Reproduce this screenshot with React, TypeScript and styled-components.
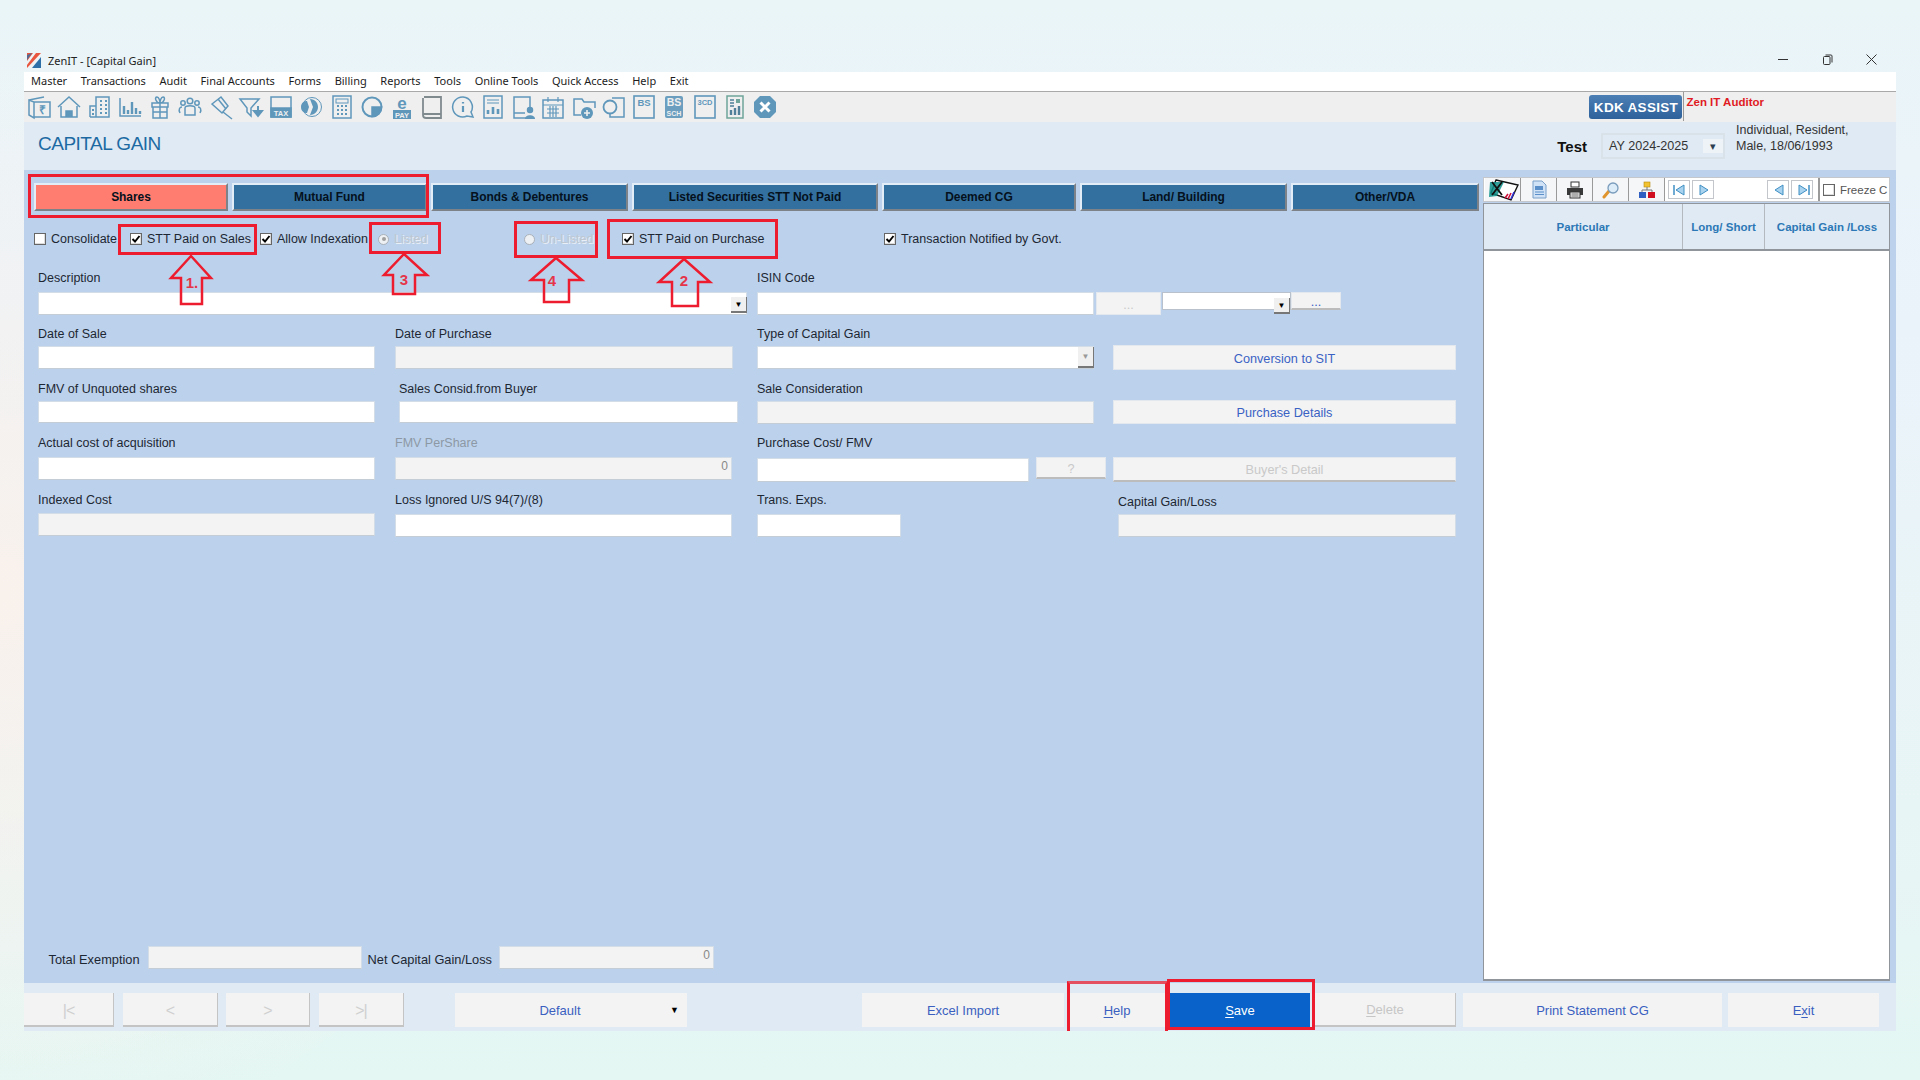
import React, { FunctionComponent, ReactNode } from 'react'
import styled, { createGlobalStyle, css } from 'styled-components'

const GlobalStyle = createGlobalStyle`
  html, body {
    margin: 0;
    padding: 0;
  }
  body {
    font-family: "Liberation Sans", Arial, sans-serif;
    font-size: 12px;
  }
`

const Page = styled.div`
  position: relative;
  box-sizing: border-box;
  width: 1920px;
  height: 1080px;
  padding: 47px 24px 0;
  overflow: hidden;
  background:
    radial-gradient(circle at 0 55%, #f9f1ec 0, rgba(249, 241, 236, 0) 28%),
    linear-gradient(180deg, #eaf5f8 0%, #eaf3fa 30%, #e8f5f5 75%, #e4f7f3 100%);
`

const Window = styled.div`
  width: 1872px;
`

const TitleBar = styled.div`
  display: flex;
  align-items: center;
  box-sizing: border-box;
  height: 25px;
  padding: 1px 19px 0 3px;
`
const TitleText = styled.span`
  margin-left: 7px;
  font-family: "Noto Sans", sans-serif;
  font-size: 11px;
  color: #222;
`
const WindowControls = styled.div`
  display: flex;
  gap: 33px;
  margin-left: auto;
  margin-top: -1px;
  color: #333;
`

const MenuBar = styled.div`
  display: flex;
  align-items: center;
  gap: 13.65px;
  box-sizing: border-box;
  height: 20px;
  padding: 0 0 2px 7px;
  background: #fff;
  border-bottom: 1px solid #a9a9a9;
`
const MenuItem = styled.span`
  font-family: "Noto Sans", sans-serif;
  font-size: 11px;
  color: #1c1c1c;
`

const ToolBar = styled.div`
  display: flex;
  height: 30px;
  background: #efefef;
`
const IconCell = styled.div`
  display: flex;
  align-items: center;
  justify-content: center;
  width: 30.25px;
  height: 30px;
`
const AssistGroup = styled.div`
  display: flex;
  margin-left: auto;
  padding-right: 132px;
`
const AssistButton = styled.div`
  display: flex;
  align-items: center;
  justify-content: center;
  width: 93px;
  height: 24px;
  margin-top: 3px;
  border-radius: 3px;
  background: linear-gradient(180deg, #4b7fb4 0%, #2e619a 100%);
  color: #fff;
  font-weight: 700;
  font-size: 13.5px;
  letter-spacing: 0.3px;
`
const AssistDivider = styled.div`
  width: 1px;
  height: 29px;
  margin-left: 1px;
  background: #9a9a9a;
`
const AuditorText = styled.span`
  margin: 4px 0 0 2px;
  color: #e01b24;
  font-weight: 700;
  font-size: 11.5px;
`

const Header = styled.div`
  display: flex;
  align-items: center;
  height: 48px;
  background: #e0eaf4;
`
const PageTitle = styled.h1`
  margin: -4px 0 0 14px;
  font-size: 19px;
  font-weight: 400;
  letter-spacing: -0.5px;
  color: #1d6aa3;
`
const CustomerName = styled.span`
  margin-left: auto;
  font-size: 15px;
  font-weight: 700;
  color: #111;
`
const YearSelect = styled.div`
  display: flex;
  align-items: center;
  box-sizing: border-box;
  width: 124px;
  height: 26px;
  margin-left: 14px;
  padding-left: 6px;
  border: 2px solid #d9e1e9;
  font-size: 12.6px;
  color: #333;
`
const YearArrow = styled.span`
  display: flex;
  align-items: center;
  justify-content: center;
  width: 20px;
  height: 14px;
  margin-left: auto;
  background: #eef3f8;
  font-size: 11px;
  color: #2c3e50;
`
const ProfileText = styled.div`
  align-self: flex-start;
  width: 160px;
  margin-left: 11px;
  font-size: 12.5px;
  line-height: 16px;
  color: #333;
`

const Main = styled.div`
  display: flex;
  height: 813px;
  background: #bcd2ec;
`
const LeftPane = styled.div`
  width: 1459px;
`
const TabRow = styled.div`
  display: flex;
  gap: 4px;
  padding: 13px 0 0 10px;
`
const Tab = styled.div<{ $w: number; $active?: boolean }>`
  display: flex;
  align-items: center;
  justify-content: center;
  box-sizing: border-box;
  width: ${(p) => p.$w}px;
  height: 28px;
  border: 2px solid;
  border-color: #e3edf7 #7d8288 #7d8288 #e3edf7;
  background: ${(p) => (p.$active ? '#ff7d70' : '#33709f')};
  color: #05111c;
  font-size: 12px;
  font-weight: 700;
  letter-spacing: -0.05px;
`

const OptionRow = styled.div`
  display: flex;
  align-items: center;
  height: 16px;
  margin: 20px 0 24px;
  padding-left: 10px;
`
const Option = styled.label<{ $w: number; $disabled?: boolean }>`
  display: flex;
  align-items: center;
  gap: 5px;
  width: ${(p) => p.$w}px;
  font-size: 12.5px;
  white-space: nowrap;
  color: ${(p) => (p.$disabled ? '#bec7d1' : '#1d2733')};
  ${(p) =>
    p.$disabled &&
    css`
      text-shadow: 1px 1px 0 #e9eff6;
    `}
`
const CheckBox = styled.span`
  display: flex;
  align-items: center;
  justify-content: center;
  flex: none;
  box-sizing: border-box;
  width: 12px;
  height: 12px;
  border: 1px solid #666;
  background: #fff;
  box-shadow: inset -1px -1px 0 #dcdcdc;
`
const Radio = styled.span<{ $on?: boolean }>`
  position: relative;
  flex: none;
  box-sizing: border-box;
  width: 11px;
  height: 11px;
  border: 1px solid #a9b1b9;
  border-radius: 50%;
  background: #eef1f4;
  ${(p) =>
    p.$on &&
    css`
      &::after {
        content: '';
        position: absolute;
        inset: 2.5px;
        border-radius: 50%;
        background: #a0a0a0;
      }
    `}
`

const FormRow = styled.div<{ $top?: number }>`
  display: flex;
  align-items: flex-start;
  padding-left: 14px;
  margin-top: ${(p) => p.$top ?? 0}px;
`
const FieldWrap = styled.div<{ $w: number; $ml?: number }>`
  flex: none;
  width: ${(p) => p.$w}px;
  margin-left: ${(p) => p.$ml ?? 0}px;
`
const FieldLabel = styled.div<{ $gap: number; $muted?: boolean; $shift?: number }>`
  height: 14px;
  margin-bottom: ${(p) => p.$gap}px;
  margin-top: ${(p) => p.$shift ?? 0}px;
  line-height: 14px;
  font-size: 12.5px;
  white-space: nowrap;
  color: ${(p) => (p.$muted ? '#8d98a5' : '#1d2733')};
`
const TextBox = styled.input<{ $h?: number; $w?: number }>`
  display: block;
  box-sizing: border-box;
  width: ${(p) => (p.$w ? `${p.$w}px` : '100%')};
  height: ${(p) => p.$h ?? 23}px;
  padding: 0 3px 6px;
  border: 1px solid #d3dde8;
  border-bottom-color: #c4ccd5;
  background: #fff;
  font: 12px "Liberation Sans", Arial, sans-serif;
  text-align: right;
  color: #888;
  outline: none;
  &:disabled {
    background: #f3f3f3;
  }
`
const InputSlot = styled.div`
  position: relative;
`
const DropButton = styled.span<{ $disabled?: boolean }>`
  position: absolute;
  top: ${(p) => (p.$disabled ? 1 : 5)}px;
  right: 0;
  display: flex;
  align-items: center;
  justify-content: center;
  box-sizing: border-box;
  width: 16px;
  height: ${(p) => (p.$disabled ? 21 : 16)}px;
  border-right: 1px solid #777;
  border-bottom: 2px solid #777;
  background: #f0f0f0;
  font-size: 8px;
  color: ${(p) => (p.$disabled ? '#999' : '#000')};
`
const SideButton = styled.div<{ $w: number; $h: number; $ml?: number; $mt?: number; $disabled?: boolean; $raised?: boolean }>`
  display: flex;
  align-items: center;
  justify-content: center;
  flex: none;
  box-sizing: border-box;
  width: ${(p) => p.$w}px;
  height: ${(p) => p.$h}px;
  margin-left: ${(p) => p.$ml ?? 0}px;
  margin-top: ${(p) => p.$mt ?? 0}px;
  padding-top: 2px;
  background: #f3f3f3;
  border: 1px solid #e3e8ee;
  border-bottom-color: ${(p) => (p.$raised ? '#bcbcbc' : '#e3e8ee')};
  border-bottom-width: ${(p) => (p.$raised ? 2 : 1)}px;
  font-size: 12.7px;
  color: ${(p) => (p.$disabled ? '#c9c9c9' : '#3a62c4')};
`
const MiniCombo = styled.div`
  position: relative;
  box-sizing: border-box;
  width: 129px;
  height: 18px;
  margin-top: 21px;
  margin-left: 1px;
  background: #fff;
  border: 1px solid #b9c2cc;
`

const SummaryRow = styled.div`
  display: flex;
  align-items: center;
  height: 23px;
  margin-top: 409px;
  padding-left: 24.5px;
  font-size: 12.8px;
  color: #1d2733;
`
const SummaryLabel = styled.span<{ $ml?: number }>`
  margin-left: ${(p) => p.$ml ?? 0}px;
  margin-top: 4px;
  white-space: nowrap;
`

const RightPane = styled.div`
  display: flex;
  flex-direction: column;
  width: 407px;
  margin-top: 7px;
`
const GridTools = styled.div`
  display: flex;
  align-items: center;
  box-sizing: border-box;
  height: 25px;
  padding-left: 1px;
  background: #fff;
  border: 1px solid #c4c8cc;
  overflow: hidden;
`
const ToolCell = styled.div`
  display: flex;
  align-items: center;
  justify-content: center;
  flex: none;
  box-sizing: border-box;
  width: 36px;
  height: 23px;
  border-right: 1px solid #9a9a9a;
  background: #f4f6f8;
`
const NavStrip = styled.div`
  display: flex;
  align-items: center;
  flex: none;
  gap: 2px;
  box-sizing: border-box;
  width: 155px;
  height: 23px;
  padding: 0 5px 0 3px;
  border-right: 2px solid #9a9a9a;
`
const NavButton = styled.div<{ $push?: boolean }>`
  display: flex;
  align-items: center;
  justify-content: center;
  box-sizing: border-box;
  width: 22px;
  height: 19px;
  margin-left: ${(p) => (p.$push ? 'auto' : '0')};
  border: 1px solid #c3c7cb;
  background: #fff;
`
const FreezeLabel = styled.span`
  display: flex;
  align-items: center;
  flex: none;
  gap: 5px;
  margin-left: 3px;
  font-size: 11.5px;
  color: #555;
`
const GridHead = styled.div`
  display: flex;
  box-sizing: border-box;
  height: 48px;
  margin-top: 1px;
  background: #e0eaf4;
  border: 1px solid #8f959b;
  border-bottom-width: 2px;
`
const GridHeadCell = styled.div<{ $w: number; $last?: boolean }>`
  display: flex;
  align-items: center;
  justify-content: center;
  box-sizing: border-box;
  width: ${(p) => p.$w}px;
  border-right: ${(p) => (p.$last ? 'none' : '1px solid #b3b9bf')};
  color: #2c78b6;
  font-size: 11.5px;
  font-weight: 700;
`
const GridBody = styled.div`
  height: 728px;
  background: #fff;
  border: 1px solid #8f959b;
  border-top: none;
  border-bottom-width: 2px;
`

const Footer = styled.div`
  display: flex;
  height: 48px;
  padding-top: 10px;
  box-sizing: border-box;
  background: #e0eaf4;
`
const FootButton = styled.div<{ $w: number; $ml?: number; $primary?: boolean; $disabled?: boolean; $raised?: boolean }>`
  display: flex;
  align-items: center;
  justify-content: center;
  box-sizing: border-box;
  width: ${(p) => p.$w}px;
  height: 34px;
  margin-left: ${(p) => p.$ml ?? 0}px;
  background: ${(p) => (p.$primary ? '#0862c9' : '#f3f3f3')};
  font-size: 13px;
  color: ${(p) => (p.$primary ? '#fff' : p.$disabled ? '#c6c6c6' : '#3a5fc0')};
  ${(p) =>
    p.$raised &&
    css`
      border-right: 1px solid #c4c4c4;
      border-bottom: 2px solid #c4c4c4;
    `}
  u {
    text-underline-offset: 2px;
  }
`
const PagerButton = styled(FootButton)`
  padding-top: 3px;
  font-size: 16px;
  letter-spacing: -1px;
  color: #cfcfcf;
`
const DefaultButton = styled(FootButton)`
  position: relative;
  padding-right: 22px;
`
const ComboArrow = styled.span`
  position: absolute;
  right: 8px;
  font-size: 9px;
  color: #000;
`

const RedBox = styled.div<{ $x: number; $y: number; $w: number; $h: number; $open?: boolean }>`
  position: absolute;
  left: ${(p) => p.$x}px;
  top: ${(p) => p.$y}px;
  box-sizing: border-box;
  width: ${(p) => p.$w}px;
  height: ${(p) => p.$h}px;
  border: 3px solid #ed1c2e;
  ${(p) =>
    p.$open &&
    css`
      border-bottom: none;
      border-top-color: #e4505f;
    `}
`
const ArrowSvg = styled.svg<{ $x: number; $y: number }>`
  position: absolute;
  left: ${(p) => p.$x}px;
  top: ${(p) => p.$y}px;
  overflow: visible;
`
const ArrowLabel = styled.text`
  font-family: "Liberation Sans", Arial, sans-serif;
  font-size: 15px;
  font-weight: 700;
  fill: #e5354a;
`

interface ArrowProps {
  tipX: number
  tipY: number
  left: number
  right: number
  baseY: number
  shaftL: number
  shaftR: number
  bottom: number
  label: string
  labelX: number
  labelY: number
}

const UpArrow: FunctionComponent<ArrowProps> = ({ tipX, tipY, left, right, baseY, shaftL, shaftR, bottom, label, labelX, labelY }) => {
  const pts = [
    [tipX, tipY],
    [right, baseY],
    [shaftR, baseY],
    [shaftR, bottom],
    [shaftL, bottom],
    [shaftL, baseY],
    [left, baseY],
  ]
    .map(([x, y]) => `${x - left},${y - tipY}`)
    .join(' ')
  return (
    <ArrowSvg $x={left} $y={tipY} width={right - left} height={bottom - tipY}>
      <polygon points={pts} fill="none" stroke="#ed1c2e" strokeWidth="2.5" />
      <ArrowLabel x={labelX - left} y={labelY - tipY + 5} textAnchor="middle">
        {label}
      </ArrowLabel>
    </ArrowSvg>
  )
}

const Tick = () => (
  <svg width="10" height="10" viewBox="0 0 10 10">
    <path d="M1.5 5 L4 7.5 L8.5 2" fill="none" stroke="#000" strokeWidth="1.9" />
  </svg>
)

const ic = '#5f97bb'

const Ico: FunctionComponent<{ children: ReactNode }> = ({ children }) => (
  <IconCell>
    <svg width="26" height="26" viewBox="0 0 26 26" fill="none" stroke={ic} strokeWidth="1.5">
      {children}
    </svg>
  </IconCell>
)

const iconText = { fontFamily: 'Liberation Sans, Arial, sans-serif', fontWeight: 700 }

const toolbarIcons: ReactNode[] = [
  <>
    <path d="M3 6 L3 21 L8 24 L8 8 Z M3 6 L18 3 M8 8 H24 V23 H8" />
    <text x="16" y="20" textAnchor="middle" fontSize="12" fill={ic} stroke="none" style={iconText}>₹</text>
  </>,
  <>
    <path d="M2 13 L13 3 L24 13 M5 12 V23 H21 V12" />
    <path d="M10 23 V17 H16 V23" fill={ic} />
  </>,
  <>
    <path d="M3 23 V12 H9 M9 23 V3 H22 V23 H3" />
    <path d="M13 7 h2 M18 7 h2 M13 11 h2 M18 11 h2 M13 15 h2 M18 15 h2 M13 19 h2 M18 19 h2 M5 16 h2 M5 20 h2" strokeWidth="2" />
  </>,
  <>
    <path d="M3 4 V22 H24" />
    <path d="M7 12 V20 M11 16 V20 M15 8 V20 M19 14 V20 M23 17 V20" strokeWidth="2.4" />
  </>,
  <>
    <path d="M5 9 H21 V13 H5 Z M6 13 V24 H20 V13 M13 9 V24 M6 18 H20 M13 9 C9 9 7 3 10 3 C12 3 13 7 13 9 C13 7 14 3 16 3 C19 3 17 9 13 9" />
  </>,
  <>
    <circle cx="13" cy="7" r="2.8" />
    <circle cx="6" cy="9" r="2.2" />
    <circle cx="20" cy="9" r="2.2" />
    <path d="M8 21 V14 C8 11 18 11 18 14 V21 Z M3 19 C1 15 3 13 5 13 M23 19 C25 15 23 13 21 13" />
  </>,
  <>
    <path d="M4 10 L13 3 L20 12 L14 19 Z M15 18 L24 25" />
    <path d="M10 5 L18 15" />
  </>,
  <>
    <path d="M2 5 H21 L13 14 V22 L9 18 V14 Z" />
    <path d="M20 12 V18 M16 17 H24 L20 22 Z" fill={ic} strokeWidth="2" />
  </>,
  <>
    <rect x="3" y="3" width="20" height="20" />
    <rect x="3" y="14" width="20" height="9" fill={ic} />
    <text x="13" y="22" textAnchor="middle" fontSize="7.5" fill="#efefef" stroke="none" style={iconText}>TAX</text>
  </>,
  <>
    <circle cx="14" cy="13" r="9.5" strokeWidth="1" />
    <path d="M3 13 C3 9 6 7 9 7 L11 13 L9 19 C6 19 3 17 3 13 Z M12 5 C17 5 20 9 20 13 C20 17 17 21 12 21 L15 13 Z" fill={ic} stroke="none" />
  </>,
  <>
    <rect x="4" y="2" width="18" height="22" />
    <rect x="7" y="5" width="12" height="4" strokeWidth="1" />
    <path d="M8 12 h2 M12 12 h2 M16 12 h2 M8 16 h2 M12 16 h2 M16 16 h2 M8 20 h2 M12 20 h2 M16 20 h2" strokeWidth="2" />
  </>,
  <>
    <circle cx="13" cy="13" r="9.5" strokeWidth="2" />
    <path d="M13 13 H22.5 A9.5 9.5 0 0 1 13 22.5 Z" fill={ic} />
  </>,
  <>
    <text x="13" y="15" textAnchor="middle" fontSize="17" fill={ic} stroke="none" style={iconText}>e</text>
    <rect x="4" y="16" width="18" height="9" fill={ic} stroke="none" />
    <text x="13" y="23.5" textAnchor="middle" fontSize="7.5" fill="#efefef" stroke="none" style={iconText}>PAY</text>
  </>,
  <path d="M5 3 H22 V24 H7 C5 24 4 23 4 21 V4 M4 20 H22" stroke="#7f8a8f" strokeWidth="1.8" />,
  <>
    <path d="M13 3 A10 10 0 1 0 17 22 L23 23 L21 18 A10 10 0 0 0 13 3 Z" />
    <path d="M13 8 V9.5 M13 12 V18" strokeWidth="2.2" />
  </>,
  <>
    <rect x="4" y="2" width="18" height="22" />
    <path d="M7 6 H19 M7 9 H19" strokeWidth="1.2" />
    <path d="M8 20 V16 M13 20 V13 M18 20 V15" strokeWidth="2.6" />
  </>,
  <>
    <path d="M16 24 H4 V3 H20 V13 M4 19 H15" />
    <circle cx="20" cy="16" r="2.5" fill={ic} />
    <path d="M15 25 C15 20 25 20 25 25 Z" fill={ic} stroke="none" />
  </>,
  <>
    <rect x="3" y="6" width="20" height="18" />
    <path d="M8 3 V8 M18 3 V8 M3 11 H23 M7 15 H19 M7 19 H19 M10 12 V23 M13 12 V23 M16 12 V23" strokeWidth="1.2" />
  </>,
  <>
    <path d="M10 21 H3 V5 H11 L13 8 H24 V14" />
    <circle cx="16" cy="19" r="6" fill={ic} stroke="none" />
    <path d="M16 16 V22 M13 19 H19" stroke="#efefef" strokeWidth="1.6" />
  </>,
  <>
    <path d="M11 4 H23 V23 H9 V19" />
    <circle cx="9" cy="13" r="6.5" strokeWidth="1.8" />
  </>,
  <>
    <rect x="3" y="2" width="20" height="22" strokeWidth="1.6" />
    <text x="13" y="12" textAnchor="middle" fontSize="9.5" fill={ic} stroke="none" style={iconText}>BS</text>
  </>,
  <>
    <rect x="4" y="2" width="18" height="22" rx="2" fill={ic} stroke="none" opacity="0.92" />
    <text x="13" y="12" textAnchor="middle" fontSize="10.5" fill="#efefef" stroke="none" style={iconText}>BS</text>
    <text x="13" y="22" textAnchor="middle" fontSize="7" fill="#efefef" stroke="none" style={iconText}>SCH</text>
  </>,
  <>
    <rect x="3" y="2" width="20" height="22" strokeWidth="1.6" />
    <text x="13" y="11" textAnchor="middle" fontSize="7.5" fill={ic} stroke="none" style={iconText}>3CD</text>
  </>,
  <>
    <rect x="5" y="2" width="16" height="22" stroke="#6fa59a" />
    <path d="M8 6 H12 M8 9 H12 M8 12 H12" stroke="#4f7f99" strokeWidth="1.4" />
    <rect x="14" y="5" width="4" height="4" fill="#6fa59a" stroke="none" />
    <path d="M9 21 V16 M13 21 V14 M17 21 V12" stroke="#4f7f99" strokeWidth="2.4" />
  </>,
  <>
    <path d="M8 2 H18 L24 8 V18 L18 24 H8 L2 18 V8 Z" fill={ic} stroke="none" />
    <path d="M8.5 8.5 L17.5 17.5 M17.5 8.5 L8.5 17.5" stroke="#fff" strokeWidth="3" />
  </>,
]

const menuItems = ['Master', 'Transactions', 'Audit', 'Final Accounts', 'Forms', 'Billing', 'Reports', 'Tools', 'Online Tools', 'Quick Access', 'Help', 'Exit']

const tabs = [
  { label: 'Shares', w: 194, active: true },
  { label: 'Mutual Fund', w: 195 },
  { label: 'Bonds & Debentures', w: 197 },
  { label: 'Listed Securities STT Not Paid', w: 246 },
  { label: 'Deemed CG', w: 194 },
  { label: 'Land/ Building', w: 207 },
  { label: 'Other/VDA', w: 188 },
]

interface FieldProps {
  label: string
  w: number
  ml?: number
  gap?: number
  disabled?: boolean
  muted?: boolean
  value?: string
  shift?: number
  h?: number
  children?: ReactNode
}

const Field: FunctionComponent<FieldProps> = ({ label, w, ml, gap = 5, disabled, muted, value = '', shift, h, children }) => (
  <FieldWrap $w={w} $ml={ml}>
    <FieldLabel $gap={gap} $muted={muted} $shift={shift}>
      {label}
    </FieldLabel>
    <InputSlot>
      <TextBox $h={h} disabled={disabled} readOnly value={value} />
      {children}
    </InputSlot>
  </FieldWrap>
)

const TriangleNav: FunctionComponent<{ dir: 'first' | 'next' | 'prev' | 'last' }> = ({ dir }) => {
  const paths = {
    first: 'M13 3 L5 8 L13 13 Z',
    next: 'M5 3 L13 8 L5 13 Z',
    prev: 'M13 3 L5 8 L13 13 Z',
    last: 'M5 3 L13 8 L5 13 Z',
  }
  return (
    <svg width="16" height="16" viewBox="0 0 16 16">
      <path d={paths[dir]} fill="#a9d3ee" stroke="#3f8fc4" strokeWidth="1" />
      {dir === 'first' && <path d="M3 3 V13" stroke="#3f8fc4" strokeWidth="1.5" />}
      {dir === 'last' && <path d="M15 3 V13" stroke="#3f8fc4" strokeWidth="1.5" />}
    </svg>
  )
}

const App: FunctionComponent = () => (
  <Page>
    <GlobalStyle />
    <Window>
      <TitleBar>
        <svg width="14" height="15" viewBox="0 0 14 15">
          <path d="M0 0 H6 L0 8 Z" fill="#e8563f" />
          <path d="M8 0 H14 V2 L4 15 H0 V11 Z" fill="#f2f2f2" />
          <path d="M9 0 H14 L0 15 V12 Z" fill="#e8563f" />
          <path d="M14 4 V15 H5 Z" fill="#2f6fa8" />
          <path d="M0 2 L5 0 L0 7 Z" fill="#2f6fa8" opacity="0.8" />
        </svg>
        <TitleText>ZenIT - [Capital Gain]</TitleText>
        <WindowControls>
          <svg width="11" height="11" viewBox="0 0 11 11">
            <path d="M0 5.5 H10" stroke="currentColor" strokeWidth="1" />
          </svg>
          <svg width="11" height="11" viewBox="0 0 11 11" fill="none" stroke="currentColor">
            <rect x="1.5" y="2.5" width="6.5" height="8" rx="1" />
            <path d="M3.5 1 H9 Q10 1 10 2 V8.5" />
          </svg>
          <svg width="11" height="11" viewBox="0 0 11 11">
            <path d="M0.5 0.5 L10.5 10.5 M10.5 0.5 L0.5 10.5" stroke="currentColor" strokeWidth="1" />
          </svg>
        </WindowControls>
      </TitleBar>

      <MenuBar>
        {menuItems.map((item) => (
          <MenuItem key={item}>{item}</MenuItem>
        ))}
      </MenuBar>

      <ToolBar>
        {toolbarIcons.map((icon, index) => (
          <Ico key={index}>{icon}</Ico>
        ))}
        <AssistGroup>
          <AssistButton>KDK ASSIST</AssistButton>
          <AssistDivider />
          <AuditorText>Zen IT Auditor</AuditorText>
        </AssistGroup>
      </ToolBar>

      <Header>
        <PageTitle>CAPITAL GAIN</PageTitle>
        <CustomerName>Test</CustomerName>
        <YearSelect>
          AY 2024-2025
          <YearArrow>▾</YearArrow>
        </YearSelect>
        <ProfileText>
          Individual, Resident,
          <br />
          Male, 18/06/1993
        </ProfileText>
      </Header>

      <Main>
        <LeftPane>
          <TabRow>
            {tabs.map((tab) => (
              <Tab key={tab.label} $w={tab.w} $active={tab.active}>
                {tab.label}
              </Tab>
            ))}
          </TabRow>

          <OptionRow>
            <Option $w={96}>
              <CheckBox />
              Consolidate
            </Option>
            <Option $w={130}>
              <CheckBox>
                <Tick />
              </CheckBox>
              STT Paid on Sales
            </Option>
            <Option $w={118}>
              <CheckBox>
                <Tick />
              </CheckBox>
              Allow Indexation
            </Option>
            <Option $w={146} $disabled>
              <Radio $on />
              Listed
            </Option>
            <Option $w={98} $disabled>
              <Radio />
              Un-Listed
            </Option>
            <Option $w={262}>
              <CheckBox>
                <Tick />
              </CheckBox>
              STT Paid on Purchase
            </Option>
            <Option $w={190}>
              <CheckBox>
                <Tick />
              </CheckBox>
              Transaction Notified by Govt.
            </Option>
          </OptionRow>

          <FormRow>
            <Field label="Description" w={709} gap={7}>
              <DropButton>▼</DropButton>
            </Field>
            <Field label="ISIN Code" w={337} ml={10} gap={7} />
            <SideButton $w={65} $h={23} $ml={2} $mt={21} $disabled>
              ...
            </SideButton>
            <MiniCombo>
              <DropButton>▼</DropButton>
            </MiniCombo>
            <SideButton $w={50} $h={18} $mt={21} $raised>
              ...
            </SideButton>
          </FormRow>

          <FormRow $top={12}>
            <Field label="Date of Sale" w={337} />
            <Field label="Date of Purchase" w={338} ml={20} disabled />
            <Field label="Type of Capital Gain" w={337} ml={24}>
              <DropButton $disabled>▼</DropButton>
            </Field>
            <SideButton $w={343} $h={25} $ml={19} $mt={18}>
              Conversion to SIT
            </SideButton>
          </FormRow>

          <FormRow $top={12}>
            <Field label="FMV of Unquoted shares" w={337} h={22} />
            <Field label="Sales Consid.from Buyer" w={339} ml={24} h={22} />
            <Field label="Sale Consideration" w={337} ml={19} h={23} disabled />
            <SideButton $w={343} $h={24} $ml={19} $mt={18}>
              Purchase Details
            </SideButton>
          </FormRow>

          <FormRow $top={12}>
            <Field label="Actual cost of acquisition" w={337} gap={7} />
            <Field label="FMV PerShare" w={337} ml={20} gap={7} disabled muted value="0" />
            <Field label="Purchase Cost/ FMV" w={272} ml={25} gap={8} h={24} />
            <SideButton $w={70} $h={22} $ml={7} $mt={21} $disabled $raised>
              ?
            </SideButton>
            <SideButton $w={343} $h={25} $ml={7} $mt={21} $disabled $raised>
              Buyer's Detail
            </SideButton>
          </FormRow>

          <FormRow $top={11}>
            <Field label="Indexed Cost" w={337} gap={6} disabled />
            <Field label="Loss Ignored U/S 94(7)/(8)" w={337} ml={20} gap={7} />
            <Field label="Trans. Exps." w={144} ml={25} gap={7} />
            <Field label="Capital Gain/Loss" w={338} ml={217} gap={5} shift={2} disabled />
          </FormRow>

          <SummaryRow>
            <SummaryLabel>Total Exemption</SummaryLabel>
            <FieldWrap $w={214} $ml={8}>
              <TextBox disabled readOnly value="" />
            </FieldWrap>
            <SummaryLabel $ml={6}>Net Capital Gain/Loss</SummaryLabel>
            <FieldWrap $w={215} $ml={7}>
              <TextBox disabled readOnly value="0" />
            </FieldWrap>
          </SummaryRow>
        </LeftPane>

        <RightPane>
          <GridTools>
            <ToolCell>
              <svg width="32" height="22" viewBox="0 0 32 22" fill="none">
                <path d="M9 1 L31 6 L24 21 L4 14 Z" stroke="#111" strokeWidth="1.4" fill="#fff" />
                <path d="M3 3 L17 3 L10 17 L2 18 Z" fill="#0d8f8a" opacity="0.85" />
                <path d="M5 3 L15 16 M15 3 L5 16" stroke="#111" strokeWidth="1.8" />
                <path d="M18 19 L21 15 M21 20 L24 14" stroke="#d0103a" strokeWidth="1.6" />
                <path d="M24 20 L27 13" stroke="#3030d0" strokeWidth="1.6" />
              </svg>
            </ToolCell>
            <ToolCell>
              <svg width="18" height="19" viewBox="0 0 18 19">
                <path d="M3 1 H12 L16 5 V18 H3 Z" fill="#cfe2f6" stroke="#7aa0c8" />
                <rect x="5" y="6" width="8" height="4" fill="#5b8fc9" />
                <path d="M5 12 H14 M5 14.5 H14" stroke="#5b8fc9" strokeWidth="1" />
              </svg>
            </ToolCell>
            <ToolCell>
              <svg width="18" height="18" viewBox="0 0 18 18">
                <rect x="5" y="1" width="8" height="5" fill="#fff" stroke="#333" />
                <path d="M1 7 H17 V14 H1 Z" fill="#3a3a3a" />
                <rect x="4" y="11" width="10" height="6" fill="#e8e8e8" stroke="#333" />
                <path d="M5.5 13 H12.5 M5.5 15 H12.5" stroke="#555" strokeWidth="0.8" />
              </svg>
            </ToolCell>
            <ToolCell>
              <svg width="18" height="18" viewBox="0 0 18 18">
                <path d="M7 10 L2 16" stroke="#e0952f" strokeWidth="3" strokeLinecap="round" />
                <circle cx="11" cy="7" r="5" fill="#dcecf8" stroke="#7a9cbc" strokeWidth="1.3" />
              </svg>
            </ToolCell>
            <ToolCell>
              <svg width="18" height="18" viewBox="0 0 18 18">
                <rect x="6" y="1" width="6" height="5" fill="#f2c230" stroke="#b58a10" strokeWidth="0.6" />
                <path d="M9 6 V9 M4 11 V9 H14 V11" stroke="#777" fill="none" />
                <rect x="1" y="11" width="7" height="6" fill="#2f5fc0" />
                <rect x="10" y="11" width="7" height="6" fill="#d01020" />
              </svg>
            </ToolCell>
            <NavStrip>
              <NavButton>
                <TriangleNav dir="first" />
              </NavButton>
              <NavButton>
                <TriangleNav dir="next" />
              </NavButton>
              <NavButton $push>
                <TriangleNav dir="prev" />
              </NavButton>
              <NavButton>
                <TriangleNav dir="last" />
              </NavButton>
            </NavStrip>
            <FreezeLabel>
              <CheckBox />
              Freeze C
            </FreezeLabel>
          </GridTools>
          <GridHead>
            <GridHeadCell $w={199}>Particular</GridHeadCell>
            <GridHeadCell $w={82}>Long/ Short</GridHeadCell>
            <GridHeadCell $w={124} $last>
              Capital Gain /Loss
            </GridHeadCell>
          </GridHead>
          <GridBody />
        </RightPane>
      </Main>

      <Footer>
        <PagerButton $w={90} $disabled $raised>
          |&lt;
        </PagerButton>
        <PagerButton $w={95} $ml={9} $disabled $raised>
          &lt;
        </PagerButton>
        <PagerButton $w={84} $ml={8} $disabled $raised>
          &gt;
        </PagerButton>
        <PagerButton $w={85} $ml={9} $disabled $raised>
          &gt;|
        </PagerButton>
        <DefaultButton $w={232} $ml={51}>
          Default
          <ComboArrow>▼</ComboArrow>
        </DefaultButton>
        <FootButton $w={202} $ml={175}>
          Excel Import
        </FootButton>
        <FootButton $w={96} $ml={5}>
          <span>
            <u>H</u>elp
          </span>
        </FootButton>
        <FootButton $w={140} $ml={5} $primary>
          <span>
            <u>S</u>ave
          </span>
        </FootButton>
        <FootButton $w={141} $ml={5} $disabled $raised>
          <span>
            <u>D</u>elete
          </span>
        </FootButton>
        <FootButton $w={259} $ml={7}>
          Print Statement CG
        </FootButton>
        <FootButton $w={151} $ml={6}>
          <span>
            E<u>x</u>it
          </span>
        </FootButton>
      </Footer>
    </Window>

    <RedBox $x={28} $y={174} $w={401} $h={44} />
    <RedBox $x={118} $y={224} $w={139} $h={31} />
    <RedBox $x={369} $y={222} $w={72} $h={32} />
    <RedBox $x={514} $y={221} $w={84} $h={37} />
    <RedBox $x={607} $y={219} $w={171} $h={40} />
    <RedBox $x={1067} $y={981} $w={101} $h={50} $open />
    <RedBox $x={1167} $y={979} $w={148} $h={51} />

    <UpArrow tipX={191} tipY={256} left={171} right={211} baseY={278} shaftL={181} shaftR={202} bottom={304} label="1." labelX={192} labelY={283} />
    <UpArrow tipX={684} tipY={259} left={659} right={710} baseY={282} shaftL={672} shaftR={698} bottom={306} label="2" labelX={684} labelY={281} />
    <UpArrow tipX={404} tipY={254} left={384} right={427} baseY={275} shaftL={393} shaftR={415} bottom={294} label="3" labelX={404} labelY={280} />
    <UpArrow tipX={556} tipY={258} left={531} right={582} baseY={280} shaftL={544} shaftR={569} bottom={302} label="4" labelX={552} labelY={281} />
  </Page>
)

export default App
